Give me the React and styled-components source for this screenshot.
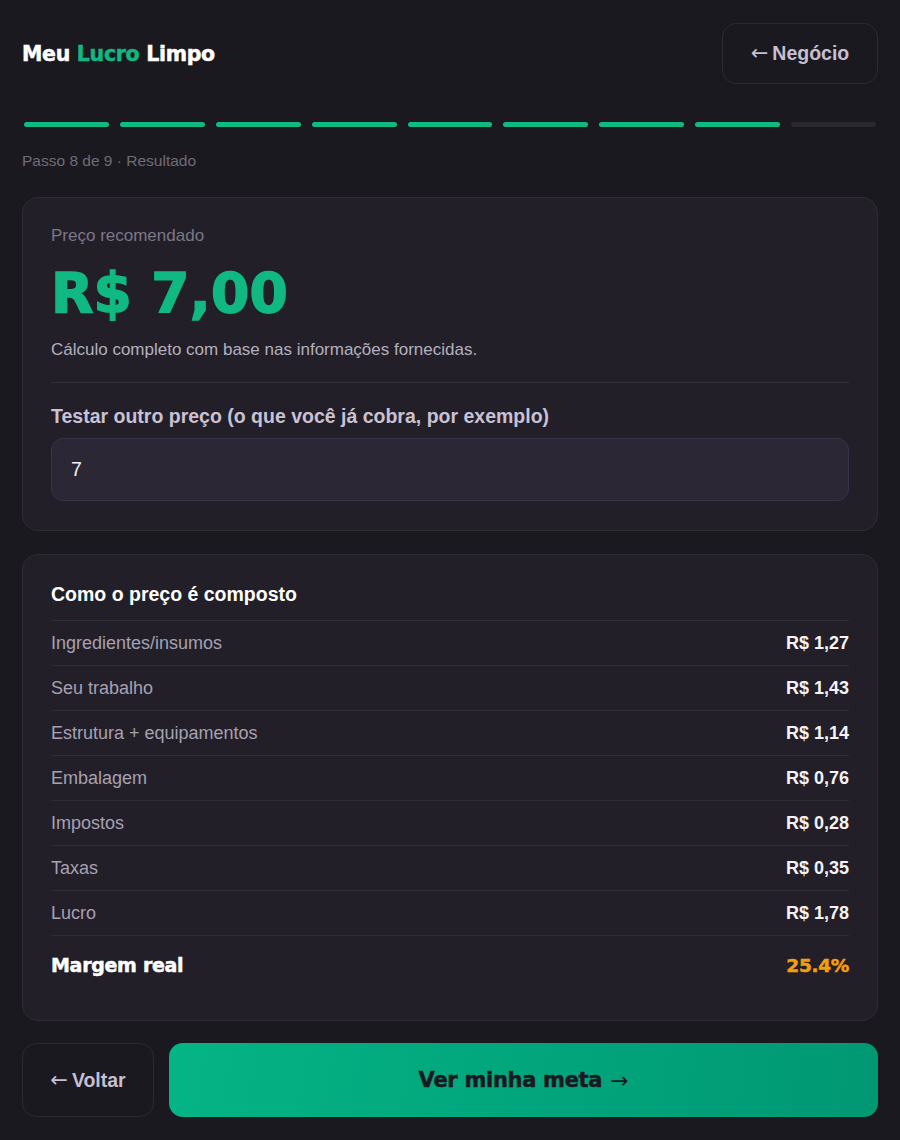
import React from "react";
import styled, { createGlobalStyle } from "styled-components";

const GlobalStyle = createGlobalStyle`
  html, body {
    margin: 0;
    padding: 0;
    background: #1b1920;
  }
  body {
    font-family: "Liberation Sans", Arial, sans-serif;
    color: #f2eff6;
  }
  * { box-sizing: border-box; }
`;

const Page = styled.div`
  width: 900px;
  min-height: 1140px;
  padding: 23px 22px 22px;
  display: flex;
  flex-direction: column;
  background: #1b1920;
`;

const Header = styled.header`
  display: flex;
  align-items: center;
  justify-content: space-between;
  height: 61px;
`;

const Brand = styled.h1`
  margin: 0;
  font-family: "DejaVu Sans", "Liberation Sans", sans-serif;
  font-weight: 700;
  font-size: 20.5px;
  letter-spacing: -0.3px;
  -webkit-text-stroke: 0.5px currentColor;
  color: #ffffff;
`;

const Accent = styled.span`
  color: #10b981;
`;

const GhostButton = styled.button`
  height: ${(p) => p.$h || 61}px;
  width: ${(p) => p.$w}px;
  flex: none;
  border-radius: 14px;
  border: 1px solid #2c2a33;
  background: #1b1920;
  color: #c6bfd2;
  font-family: "Liberation Sans", Arial, sans-serif;
  font-weight: 700;
  font-size: 19.5px;
  display: flex;
  align-items: center;
  justify-content: center;
  gap: 4px;
  cursor: pointer;
`;

const Arrow = styled.span`
  font-family: "DejaVu Sans", sans-serif;
  font-weight: 400;
  font-size: 21px;
  line-height: 1;
  color: inherit;
`;

const Progress = styled.div`
  display: flex;
  gap: 11px;
  margin: 38px 2px 0;
`;

const Segment = styled.div`
  flex: 1;
  height: 5px;
  border-radius: 3px;
  background: ${(p) => (p.$done ? "#10b981" : "#2a2830")};
`;

const StepText = styled.div`
  margin-top: 24px;
  font-size: 15.5px;
  line-height: 20px;
  color: #6f6b78;
`;

const Card = styled.section`
  margin-top: ${(p) => p.$mt}px;
  background: #221f29;
  border: 1px solid #2f2c37;
  border-radius: 16px;
  padding: 28px 28px ${(p) => p.$pb || 28}px;
  display: flex;
  flex-direction: column;
`;

const MutedLabel = styled.div`
  font-size: 17px;
  line-height: 20px;
  color: #7c7787;
`;

const Price = styled.div`
  margin-top: 17px;
  font-family: "DejaVu Sans", "Liberation Sans", sans-serif;
  font-weight: 700;
  font-size: 55px;
  line-height: 60px;
  letter-spacing: 0.2px;
  -webkit-text-stroke: 1.6px currentColor;
  color: #10b981;
`;

const Note = styled.div`
  margin-top: 17px;
  font-size: 17px;
  line-height: 20px;
  color: #b4afbd;
`;

const Divider = styled.hr`
  margin: 22px 0 0;
  border: 0;
  border-top: 1px solid #34303c;
`;

const FieldLabel = styled.label`
  margin-top: 21px;
  font-size: 19.5px;
  font-weight: 700;
  line-height: 24px;
  color: #c9c2d4;
`;

const Input = styled.input`
  margin-top: 10px;
  height: 63px;
  width: 100%;
  border-radius: 12px;
  border: 1px solid #38334a;
  background: #2b2735;
  padding: 0 19px;
  font-family: "Liberation Sans", Arial, sans-serif;
  font-size: 19.5px;
  color: #f3f0f7;
  outline: none;
`;

const SectionTitle = styled.h2`
  margin: 0 0 15px;
  font-size: 19.5px;
  font-weight: 700;
  line-height: 22px;
  color: #ffffff;
`;

const Row = styled.div`
  display: flex;
  align-items: center;
  justify-content: space-between;
  height: ${(p) => (p.$total ? 59 : 45)}px;
  border-top: 1px solid #302c38;
`;

const RowLabel = styled.span`
  font-size: 18px;
  color: #a6a1b1;
`;

const RowValue = styled.span`
  font-size: 18px;
  font-weight: 700;
  color: #f5f2f8;
`;

const TotalLabel = styled.span`
  font-family: "DejaVu Sans", "Liberation Sans", sans-serif;
  font-weight: 700;
  font-size: 19px;
  letter-spacing: -0.3px;
  -webkit-text-stroke: 0.5px currentColor;
  color: #ffffff;
`;

const TotalValue = styled.span`
  font-family: "DejaVu Sans", "Liberation Sans", sans-serif;
  font-weight: 700;
  font-size: 18.5px;
  letter-spacing: -0.3px;
  -webkit-text-stroke: 0.5px currentColor;
  color: #f59e0b;
`;

const Footer = styled.div`
  margin-top: 22px;
  display: flex;
  gap: 15px;
`;

const PrimaryButton = styled.button`
  flex: 1;
  height: 74px;
  border: 0;
  border-radius: 14px;
  background: linear-gradient(100deg, #05b485 0%, #02a67c 50%, #009873 100%);
  color: #1b1822;
  font-family: "DejaVu Sans", "Liberation Sans", sans-serif;
  font-weight: 700;
  font-size: 21px;
  letter-spacing: -0.3px;
  -webkit-text-stroke: 0.5px currentColor;
  display: flex;
  align-items: center;
  justify-content: center;
  gap: 8px;
  cursor: pointer;
`;

const PrimaryArrow = styled.span`
  font-family: "DejaVu Sans", sans-serif;
  font-weight: 400;
  font-size: 22px;
  -webkit-text-stroke: 0;
`;

const rows = [
  ["Ingredientes/insumos", "R$ 1,27"],
  ["Seu trabalho", "R$ 1,43"],
  ["Estrutura + equipamentos", "R$ 1,14"],
  ["Embalagem", "R$ 0,76"],
  ["Impostos", "R$ 0,28"],
  ["Taxas", "R$ 0,35"],
  ["Lucro", "R$ 1,78"],
];

export default function App() {
  return (
    <>
      <GlobalStyle />
      <Page>
        <Header>
          <Brand>
            Meu <Accent>Lucro</Accent> Limpo
          </Brand>
          <GhostButton $w={156}>
            <Arrow>←</Arrow>Negócio
          </GhostButton>
        </Header>

        <Progress>
          {Array.from({ length: 9 }).map((_, i) => (
            <Segment key={i} $done={i < 8} />
          ))}
        </Progress>

        <StepText>Passo 8 de 9 · Resultado</StepText>

        <Card $mt={26} $pb={29}>
          <MutedLabel>Preço recomendado</MutedLabel>
          <Price>R$ 7,00</Price>
          <Note>Cálculo completo com base nas informações fornecidas.</Note>
          <Divider />
          <FieldLabel htmlFor="preco">
            Testar outro preço (o que você já cobra, por exemplo)
          </FieldLabel>
          <Input id="preco" defaultValue="7" />
        </Card>

        <Card $mt={23} $pb={26}>
          <SectionTitle>Como o preço é composto</SectionTitle>
          {rows.map(([label, value]) => (
            <Row key={label}>
              <RowLabel>{label}</RowLabel>
              <RowValue>{value}</RowValue>
            </Row>
          ))}
          <Row $total>
            <TotalLabel>Margem real</TotalLabel>
            <TotalValue>25.4%</TotalValue>
          </Row>
        </Card>

        <Footer>
          <GhostButton $w={132} $h={74}>
            <Arrow>←</Arrow>Voltar
          </GhostButton>
          <PrimaryButton>
            Ver minha meta<PrimaryArrow>→</PrimaryArrow>
          </PrimaryButton>
        </Footer>
      </Page>
    </>
  );
}
